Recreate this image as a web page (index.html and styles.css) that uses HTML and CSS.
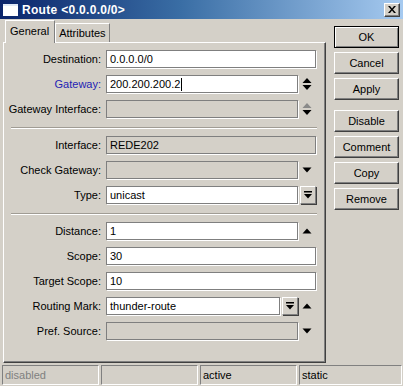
FILE: index.html
```html
<!DOCTYPE html>
<html>
<head>
<meta charset="utf-8">
<link rel="stylesheet" href="styles.css">
</head>
<body>
<div class="window">
  <div class="titlebar">
    <span class="ticon"></span>
    <span class="title">Route &lt;0.0.0.0/0&gt;</span>
    <span class="close"><svg width="8" height="7" viewBox="0 0 8 7"><path d="M0 0h2l2 2.5 2-2.5h2l-3 3.5 3 3.5h-2l-2-2.5-2 2.5h-2l3-3.5z" fill="#000"/></svg></span>
  </div>
  <div class="main">
    <div class="left">
      <div class="tabs">
        <div class="tab active">General</div>
        <div class="tab">Attributes</div>
      </div>
      <div class="panel">
        <div class="row"><span class="label">Destination:</span><span class="field full">0.0.0.0/0</span></div>
        <div class="row"><span class="label blue">Gateway:</span><span class="field short">200.200.200.2<i class="caret"></i></span>
          <span class="tail"><svg width="10" height="12" viewBox="0 0 10 12"><path d="M5 0l4.5 5h-9z" fill="#000"/><path d="M0.5 7h9l-4.5 5z" fill="#000"/></svg></span></div>
        <div class="row"><span class="label">Gateway Interface:</span><span class="field short dis"></span>
          <span class="tail"><svg width="10" height="12" viewBox="0 0 10 12"><path d="M5 0l4.5 5h-9z" fill="#8a8a8a"/><path d="M0.5 7h9l-4.5 5z" fill="#000"/></svg></span></div>
        <div class="sep"></div>
        <div class="row"><span class="label">Interface:</span><span class="field full dis">REDE202</span></div>
        <div class="row"><span class="label">Check Gateway:</span><span class="field short dis"></span>
          <span class="tail"><svg width="10" height="6" viewBox="0 0 10 6"><path d="M0.5 0.5h9l-4.5 5z" fill="#000"/></svg></span></div>
        <div class="row"><span class="label">Type:</span><span class="field short">unicast</span><span class="ddbtn"><svg width="8" height="8" viewBox="0 0 8 8"><rect x="0" y="0" width="8" height="1.5" fill="#000"/><path d="M0 3h8l-4 4.5z" fill="#000"/></svg></span></div>
        <div class="sep"></div>
        <div class="row"><span class="label">Distance:</span><span class="field short">1</span>
          <span class="tail"><svg width="10" height="6" viewBox="0 0 10 6"><path d="M5 0.5l4.5 5h-9z" fill="#000"/></svg></span></div>
        <div class="row"><span class="label">Scope:</span><span class="field full">30</span></div>
        <div class="row"><span class="label">Target Scope:</span><span class="field full">10</span></div>
        <div class="row"><span class="label">Routing Mark:</span><span class="field mark">thunder-route</span><span class="ddbtn"><svg width="8" height="8" viewBox="0 0 8 8"><rect x="0" y="0" width="8" height="1.5" fill="#000"/><path d="M0 3h8l-4 4.5z" fill="#000"/></svg></span>
          <span class="tail"><svg width="10" height="6" viewBox="0 0 10 6"><path d="M5 0.5l4.5 5h-9z" fill="#000"/></svg></span></div>
        <div class="row"><span class="label">Pref. Source:</span><span class="field short dis"></span>
          <span class="tail"><svg width="10" height="6" viewBox="0 0 10 6"><path d="M0.5 0.5h9l-4.5 5z" fill="#000"/></svg></span></div>
      </div>
    </div>
    <div class="buttons">
      <div class="btn default">OK</div>
      <div class="btn">Cancel</div>
      <div class="btn">Apply</div>
      <div class="btn spaced">Disable</div>
      <div class="btn">Comment</div>
      <div class="btn">Copy</div>
      <div class="btn">Remove</div>
    </div>
  </div>
  <div class="status">
    <div class="cell grey">disabled</div>
    <div class="cell"></div>
    <div class="cell">active</div>
    <div class="cell last">static</div>
  </div>
</div>
</body>
</html>
```
FILE: styles.css
```css
* { box-sizing: border-box; }
html, body { margin: 0; padding: 0; background: #d4d0c8; }
body { font-family: "Liberation Sans", Arial, sans-serif; font-size: 11px; color: #000; }
.window { width: 403px; height: 386px; background: #d4d0c8; overflow: hidden; }

.titlebar {
  height: 19px;
  background: linear-gradient(to right, #0a246a 0%, #3a6ea5 45%, #a6caf0 100%);
  display: flex; align-items: center; padding-left: 3px;
}
.ticon { width: 15px; height: 12px; background: #fff; border-top: 2px solid #dfe8f6; margin-right: 4px; }
.title { color: #fff; font-weight: bold; font-size: 12px; letter-spacing: 0.3px; flex: 1; }
.close {
  width: 16px; height: 14px; margin-right: 3px;
  background: #d4d0c8;
  border: 1px solid; border-color: #fff #404040 #404040 #fff;
  box-shadow: inset -1px -1px 0 #808080;
  display: flex; align-items: center; justify-content: center;
}

.main { display: flex; margin-top: 1px; }
.left { margin-left: 3px; width: 323px; }
.tabs { display: flex; align-items: flex-end; height: 22px; padding-left: 2px; }
.tab {
  height: 19px; padding: 0 3px 0 3px;
  border: 1px solid; border-bottom: none;
  border-color: #fff #808080 transparent #fff;
  display: flex; align-items: center; font-size: 11px;
}
.tab.active { padding: 0 5px 2px 4px; position: relative; z-index: 1; background: #d4d0c8; margin-bottom: -1px; height: 23px; }
.panel {
  height: 321px;
  border: 1px solid; border-color: #fff #404040 #404040 #fff;
  box-shadow: inset -1px -1px 0 #808080;
  padding-top: 7px;
}
.row { display: flex; align-items: center; height: 18px; margin-bottom: 7px; }
.label { width: 97px; text-align: right; margin-right: 5px; white-space: nowrap; }
.blue { color: #2323b4; }
.field {
  height: 18px; background: #fff;
  border: 1px solid #7f7f7f;
  box-shadow: 1px 1px 0 #fff;
  padding-left: 3px; display: flex; align-items: center;
  white-space: nowrap; font-size: 11px;
}
.field.full { width: 210px; }
.field.short { width: 192px; }
.field.mark { width: 174px; }
.field.dis { background: #d4d0c8; }
.caret { display: inline-block; width: 1px; height: 13px; background: #000; margin-left: 1px; }
.tail { width: 18px; display: flex; justify-content: center; align-items: center; }
.ddbtn {
  width: 16px; height: 18px; margin-left: 2px;
  border: 1px solid; border-color: #fff #808080 #808080 #fff;
  box-shadow: 1px 1px 0 #404040;
  display: flex; align-items: center; justify-content: center;
}
.sep { margin: 9px 8px 7px 7px; height: 2px; border-top: 1px solid #a09c94; border-bottom: 1px solid #fff; }

.buttons { margin-left: 8px; padding-top: 6px; display: flex; flex-direction: column; }
.btn {
  width: 65px; height: 22px; margin-bottom: 4px;
  border: 1px solid; border-color: #fff #404040 #404040 #fff;
  box-shadow: inset -1px -1px 0 #808080;
  display: flex; align-items: center; justify-content: center;
  font-size: 11px;
}
.btn.default { border: 1px solid #000; box-shadow: inset 1px 1px 0 #fff, inset -1px -1px 0 #808080; }
.btn.spaced { margin-top: 6px; }

.status { display: flex; gap: 2px; margin-top: 2px; padding-left: 2px; }
.cell {
  width: 97px; height: 20px;
  border: 1px solid; border-color: #808080 #fff #fff #808080;
  padding-left: 2px; display: flex; align-items: center; font-size: 11px;
}
.cell.last { width: 103px; }
.grey { color: #808080; }
```
